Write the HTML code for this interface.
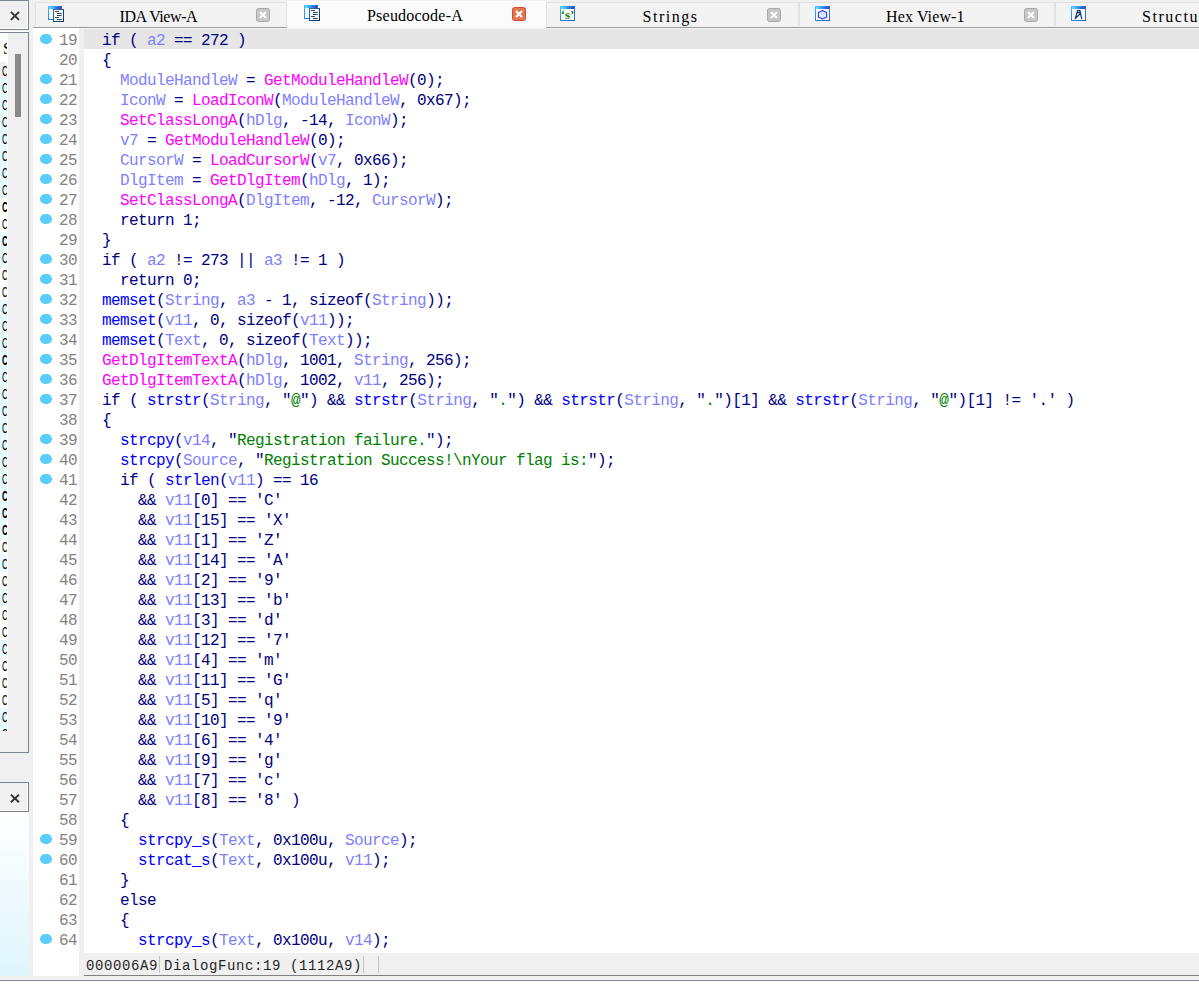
<!DOCTYPE html>
<html lang="en">
<head>
<meta charset="utf-8">
<title>IDA - Pseudocode-A</title>
<style>
*{box-sizing:border-box;margin:0;padding:0}
html,body{width:1199px;height:988px;overflow:hidden;background:#f0f0f0}
body{position:relative;font-family:"Liberation Sans",sans-serif}
.abs{position:absolute}
/* left column */
#xb1{left:-1px;top:0;width:30px;height:30px;border:1px solid #7a8391;background:#f0f0f0;box-shadow:inset -1px -1px 0 #fff}
#gap1{left:0;top:30px;width:29px;height:2px;background:#fbfbfb}
#lst{left:-1px;top:32px;width:30px;height:721px;border:1px solid #7a8391;background:#f0f0f0;overflow:hidden}
#lstc{left:0;top:0;width:8px;height:698px;background:#fff;overflow:hidden}
#lstc .hd{position:absolute;left:0;top:0;width:7px;height:29px;background:#fff;font:16px/18px "Liberation Serif",serif;color:#000;padding-left:3px;padding-top:7px;white-space:nowrap;overflow:hidden}
#lstc .r{position:absolute;left:0;width:7px;background:#fff;font:14px/19px "Liberation Sans",sans-serif;color:#000;overflow:hidden;white-space:nowrap}
#lstc .r b{display:inline-block;font-weight:inherit;transform:scaleX(.6);transform-origin:0 0;margin-left:1.5px}
#lstc .c{background:#e7fdfd}
#lstc .r0{background:#f0f0f0}
#lstc .b{font-weight:bold}
#thumb{left:15px;top:21px;width:6px;height:63px;background:#8a8a8a}
#xb2{left:-1px;top:782px;width:30px;height:30px;border:1px solid #7a8391;background:#f0f0f0;box-shadow:inset -1px -1px 0 #fff}
#ov{left:0;top:812px;width:29px;height:164px;background:linear-gradient(180deg,#ffffff 0%,#f2fbfe 40%,#def5fd 100%)}
.xi{position:absolute}
/* tabs */
#tabline{left:33px;top:26px;width:1166px;height:2px;background:linear-gradient(#ececec,#ececec 1px,#a0a0a0 1px)}
.tab{position:absolute;top:2px;height:24px;background:#f3f3f3;border:1px solid #e2e2e2;border-bottom:none}
.tab.act{top:1px;height:27px;background:#fbfbfb;border:none}
.tt{position:absolute;top:5px;font:16px/18px "Liberation Serif",serif;color:#000;white-space:pre}
.cb{position:absolute;width:14px;height:14px;border-radius:2.5px;background:#c6c6c6;border:1px solid #a9a9a9}
.cb.red{background:#df7850;border-color:#dc4636}
/* code */
#gut{left:33px;top:28px;width:46px;height:948px;background:#fff}
#band{left:79px;top:28px;width:5px;height:948px;background:#f0f0f0}
#code{left:84px;top:28px;width:1115px;height:925px;background:#fff;border-top:1px solid #f0f0f0}
#lines{left:33px;top:29px;width:1166px}
.ln{position:relative;height:20px;white-space:pre;font:16px/20px "Liberation Mono",monospace;letter-spacing:-0.6015px;color:#000080}
.ln.hl .cd{background:#e6e6e6}
.dot{position:absolute;left:7.3px;top:4.5px;width:11.3px;height:10.6px;border-radius:46%;background:#5bcdfa}
.no{position:absolute;left:26px;top:2px;width:18px;color:#858280;text-align:right}
.cd{position:absolute;left:51px;top:0;right:0;height:20px;line-height:24px}
.v{color:#8080ff}.i{color:#ff00ff}.f{color:#0000ff}.s{color:#008000}
/* status */
#st{left:84px;top:953px;width:1115px;height:23px;background:#f0f0f0;border-bottom:1px solid #808080;font:14px/22px "Liberation Mono",monospace;letter-spacing:0.6px;color:#262626;white-space:pre}
#st span{position:absolute;top:2px}
#st i{position:absolute;top:3px;width:1px;height:17px;background:#c4c4c4}
#bl{left:0;top:980px;width:1199px;height:1px;background:#858a93}
#bw{left:0;top:981px;width:1199px;height:7px;background:#fff}
</style>
</head>
<body>
<!-- left column -->
<div id="xb1" class="abs"><svg class="xi" style="left:10px;top:10px" width="12" height="12" viewBox="0 0 12 12"><path d="M0.9 0.9 L9 8.9 M9 0.9 L0.9 8.9" stroke="#333" stroke-width="1.95" fill="none"/></svg></div>
<div id="gap1" class="abs"></div>
<div id="lst" class="abs">
 <div id="lstc" class="abs">
  <div class="hd">S</div>
<div class="r r0" style="top:29px;height:17px"><b>C</b></div>
<div class="r c" style="top:46px;height:17px"><b>C</b></div>
<div class="r c" style="top:63px;height:17px"><b>C</b></div>
<div class="r c" style="top:80px;height:17px"><b>C</b></div>
<div class="r c" style="top:97px;height:17px"><b>C</b></div>
<div class="r c" style="top:114px;height:17px"><b>C</b></div>
<div class="r c" style="top:131px;height:17px"><b>C</b></div>
<div class="r c" style="top:148px;height:17px"><b>C</b></div>
<div class="r b" style="top:165px;height:17px"><b>C</b></div>
<div class="r" style="top:182px;height:17px"><b>C</b></div>
<div class="r c b" style="top:199px;height:17px"><b>C</b></div>
<div class="r c" style="top:216px;height:17px"><b>C</b></div>
<div class="r" style="top:233px;height:17px"><b>C</b></div>
<div class="r" style="top:250px;height:17px"><b>C</b></div>
<div class="r c" style="top:267px;height:17px"><b>C</b></div>
<div class="r c" style="top:284px;height:17px"><b>C</b></div>
<div class="r c" style="top:301px;height:17px"><b>C</b></div>
<div class="r c b" style="top:318px;height:17px"><b>C</b></div>
<div class="r c" style="top:335px;height:17px"><b>C</b></div>
<div class="r c" style="top:352px;height:17px"><b>C</b></div>
<div class="r c" style="top:369px;height:17px"><b>C</b></div>
<div class="r c" style="top:386px;height:17px"><b>C</b></div>
<div class="r c" style="top:403px;height:17px"><b>C</b></div>
<div class="r c" style="top:420px;height:17px"><b>C</b></div>
<div class="r c" style="top:437px;height:17px"><b>C</b></div>
<div class="r c b" style="top:454px;height:17px"><b>C</b></div>
<div class="r c b" style="top:471px;height:17px"><b>C</b></div>
<div class="r c b" style="top:488px;height:17px"><b>C</b></div>
<div class="r" style="top:505px;height:17px"><b>C</b></div>
<div class="r c" style="top:522px;height:17px"><b>C</b></div>
<div class="r" style="top:539px;height:17px"><b>C</b></div>
<div class="r c" style="top:556px;height:17px"><b>C</b></div>
<div class="r" style="top:573px;height:17px"><b>C</b></div>
<div class="r" style="top:590px;height:17px"><b>C</b></div>
<div class="r c" style="top:607px;height:17px"><b>C</b></div>
<div class="r" style="top:624px;height:17px"><b>C</b></div>
<div class="r" style="top:641px;height:17px"><b>C</b></div>
<div class="r" style="top:658px;height:17px"><b>C</b></div>
<div class="r c" style="top:675px;height:17px"><b>C</b></div>
<div class="r c" style="top:692px;height:6px"><b>C</b></div>

 </div>
 <div id="thumb" class="abs"></div>
</div>
<div id="xb2" class="abs"><svg class="xi" style="left:10px;top:10px" width="12" height="12" viewBox="0 0 12 12"><path d="M0.9 1.6 L9 9.3 M9 1.6 L0.9 9.3" stroke="#333" stroke-width="1.95" fill="none"/></svg></div>
<div id="ov" class="abs"></div>

<!-- tabs -->
<div id="tabline" class="abs"></div>
<svg width="0" height="0" style="position:absolute"><defs>
<linearGradient id="gb" x1="0" y1="0" x2="1" y2="1"><stop offset="0" stop-color="#36c0f6"/><stop offset="0.45" stop-color="#2f86e6"/><stop offset="1" stop-color="#2c5fcf"/></linearGradient>
<linearGradient id="gt" x1="0" y1="0" x2="1" y2="0"><stop offset="0" stop-color="#5fe6ff"/><stop offset="0.5" stop-color="#3a8fe6"/><stop offset="1" stop-color="#2d3bd0"/></linearGradient>
<linearGradient id="gd" x1="0" y1="0" x2="1" y2="1"><stop offset="0" stop-color="#3a6fae"/><stop offset="1" stop-color="#0b2f66"/></linearGradient>
<linearGradient id="gi" x1="0" y1="0" x2="1" y2="1"><stop offset="0" stop-color="#ffffff"/><stop offset="1" stop-color="#d8f4ff"/></linearGradient>
</defs></svg>
<div class="tab" style="left:35px;width:252px"><div style="position:absolute;left:12px;top:3px;width:17px;height:17px"><svg class="ic" width="17" height="17" viewBox="0 0 17 17"><rect x="0.5" y="0.5" width="13" height="13" fill="#f6ffff" stroke="url(#gb)"/><rect x="1" y="1" width="12" height="2" fill="url(#gt)"/><rect x="0" y="0" width="14" height="1" fill="url(#gt)" opacity="0.55"/><rect x="5.5" y="3.5" width="10" height="12" fill="url(#gi)" stroke="url(#gd)"/><path d="M7 5.5h4 M9 7.5h4.6 M9 9.5h4.6 M7 11.5h4 M9 13.5h4.6" stroke="#3d4550" stroke-width="1" fill="none"/></svg></div><span class="tt" style="left:83.5px;top:5px;letter-spacing:-0.41px">IDA View-A</span><div class="cb" style="left:220px;top:5px"><svg width="12" height="12" viewBox="0 0 12 12" style="position:absolute;left:0;top:0"><path d="M3 3 L9 9 M9 3 L3 9" stroke="#fff" stroke-width="2.1" fill="none"/></svg></div></div>
<div class="tab act" style="left:287px;width:259px"><div style="position:absolute;left:17px;top:4px;width:17px;height:17px"><svg class="ic" width="17" height="17" viewBox="0 0 17 17"><rect x="0.5" y="0.5" width="13" height="13" fill="#f6ffff" stroke="url(#gb)"/><rect x="1" y="1" width="12" height="2" fill="url(#gt)"/><rect x="0" y="0" width="14" height="1" fill="url(#gt)" opacity="0.55"/><rect x="5.5" y="3.5" width="10" height="12" fill="url(#gi)" stroke="url(#gd)"/><path d="M7 5.5h4 M9 7.5h4.6 M9 9.5h4.6 M7 11.5h4 M9 13.5h4.6" stroke="#3d4550" stroke-width="1" fill="none"/></svg></div><span class="tt" style="left:80px;top:6px;letter-spacing:0.22px">Pseudocode-A</span><div class="cb red" style="left:225px;top:6px"><svg width="12" height="12" viewBox="0 0 12 12" style="position:absolute;left:0;top:0"><path d="M3 3 L9 9 M9 3 L3 9" stroke="#fff" stroke-width="2.1" fill="none"/></svg></div></div>
<div class="tab" style="left:546px;width:253px"><div style="position:absolute;left:13px;top:3px;width:17px;height:17px"><svg class="ic" width="17" height="17" viewBox="0 0 17 17"><rect x="0.5" y="0.5" width="14" height="14" fill="#f6ffff" stroke="url(#gb)"/><rect x="1" y="1" width="13" height="2" fill="url(#gt)"/><rect x="0" y="0" width="15" height="1" fill="url(#gt)" opacity="0.55"/><text x="7.6" y="13.2" text-anchor="middle" font-family="Liberation Serif,serif" font-weight="bold" font-size="13" fill="#237d00">‘s’</text></svg></div><span class="tt" style="left:95.5px;top:5px;letter-spacing:1.54px">Strings</span><div class="cb" style="left:220px;top:5px"><svg width="12" height="12" viewBox="0 0 12 12" style="position:absolute;left:0;top:0"><path d="M3 3 L9 9 M9 3 L3 9" stroke="#fff" stroke-width="2.1" fill="none"/></svg></div></div>
<div class="tab" style="left:799px;width:256px"><div style="position:absolute;left:15px;top:3px;width:17px;height:17px"><svg class="ic" width="17" height="17" viewBox="0 0 17 17"><rect x="0.5" y="0.5" width="14" height="14" fill="#f6ffff" stroke="url(#gb)"/><rect x="1" y="1" width="13" height="2" fill="url(#gt)"/><rect x="0" y="0" width="15" height="1" fill="url(#gt)" opacity="0.55"/><path d="M7.5 4.6 L11.6 6.6 L11.6 11 L7.5 13 L3.4 11 L3.4 6.6 Z" fill="#dde9fa" stroke="#3434ff" stroke-width="1.1" stroke-linejoin="round"/></svg></div><span class="tt" style="left:86px;top:5px;letter-spacing:0.13px">Hex View-1</span><div class="cb" style="left:224px;top:5px"><svg width="12" height="12" viewBox="0 0 12 12" style="position:absolute;left:0;top:0"><path d="M3 3 L9 9 M9 3 L3 9" stroke="#fff" stroke-width="2.1" fill="none"/></svg></div></div>
<div class="tab" style="left:1055px;width:255px"><div style="position:absolute;left:15px;top:3px;width:17px;height:17px"><svg class="ic" width="17" height="17" viewBox="0 0 17 17"><rect x="0.5" y="0.5" width="14" height="14" fill="#f6ffff" stroke="url(#gb)"/><rect x="1" y="1" width="13" height="2" fill="url(#gt)"/><rect x="0" y="0" width="15" height="1" fill="url(#gt)" opacity="0.55"/><path d="M6.4 4.6h2.6 M6.6 6.6h2.4 M6.5 4.6 L4.3 12.6 M8.9 4.6 L10.7 12.6 M4.4 12.4 L9.2 7.8" stroke="#12306c" stroke-width="1.2" fill="none" stroke-linecap="round"/></svg></div><span class="tt" style="left:86px;top:5px;letter-spacing:1.53px">Structures</span><div class="cb" style="left:234px;top:5px"><svg width="12" height="12" viewBox="0 0 12 12" style="position:absolute;left:0;top:0"><path d="M3 3 L9 9 M9 3 L3 9" stroke="#fff" stroke-width="2.1" fill="none"/></svg></div></div>


<!-- code -->
<div id="gut" class="abs"></div>
<div id="band" class="abs"></div>
<div id="code" class="abs"></div>
<div id="lines" class="abs">
<div class="ln hl"><i class="dot"></i><span class="no">19</span><span class="cd">  if ( <span class="v">a2</span> == 272 )</span></div>
<div class="ln"><span class="no">20</span><span class="cd">  {</span></div>
<div class="ln"><i class="dot"></i><span class="no">21</span><span class="cd">    <span class="v">ModuleHandleW</span> = <span class="i">GetModuleHandleW</span>(0);</span></div>
<div class="ln"><i class="dot"></i><span class="no">22</span><span class="cd">    <span class="v">IconW</span> = <span class="i">LoadIconW</span>(<span class="v">ModuleHandleW</span>, 0x67);</span></div>
<div class="ln"><i class="dot"></i><span class="no">23</span><span class="cd">    <span class="i">SetClassLongA</span>(<span class="v">hDlg</span>, -14, <span class="v">IconW</span>);</span></div>
<div class="ln"><i class="dot"></i><span class="no">24</span><span class="cd">    <span class="v">v7</span> = <span class="i">GetModuleHandleW</span>(0);</span></div>
<div class="ln"><i class="dot"></i><span class="no">25</span><span class="cd">    <span class="v">CursorW</span> = <span class="i">LoadCursorW</span>(<span class="v">v7</span>, 0x66);</span></div>
<div class="ln"><i class="dot"></i><span class="no">26</span><span class="cd">    <span class="v">DlgItem</span> = <span class="i">GetDlgItem</span>(<span class="v">hDlg</span>, 1);</span></div>
<div class="ln"><i class="dot"></i><span class="no">27</span><span class="cd">    <span class="i">SetClassLongA</span>(<span class="v">DlgItem</span>, -12, <span class="v">CursorW</span>);</span></div>
<div class="ln"><i class="dot"></i><span class="no">28</span><span class="cd">    return 1;</span></div>
<div class="ln"><span class="no">29</span><span class="cd">  }</span></div>
<div class="ln"><i class="dot"></i><span class="no">30</span><span class="cd">  if ( <span class="v">a2</span> != 273 || <span class="v">a3</span> != 1 )</span></div>
<div class="ln"><i class="dot"></i><span class="no">31</span><span class="cd">    return 0;</span></div>
<div class="ln"><i class="dot"></i><span class="no">32</span><span class="cd">  <span class="f">memset</span>(<span class="v">String</span>, <span class="v">a3</span> - 1, sizeof(<span class="v">String</span>));</span></div>
<div class="ln"><i class="dot"></i><span class="no">33</span><span class="cd">  <span class="f">memset</span>(<span class="v">v11</span>, 0, sizeof(<span class="v">v11</span>));</span></div>
<div class="ln"><i class="dot"></i><span class="no">34</span><span class="cd">  <span class="f">memset</span>(<span class="v">Text</span>, 0, sizeof(<span class="v">Text</span>));</span></div>
<div class="ln"><i class="dot"></i><span class="no">35</span><span class="cd">  <span class="i">GetDlgItemTextA</span>(<span class="v">hDlg</span>, 1001, <span class="v">String</span>, 256);</span></div>
<div class="ln"><i class="dot"></i><span class="no">36</span><span class="cd">  <span class="i">GetDlgItemTextA</span>(<span class="v">hDlg</span>, 1002, <span class="v">v11</span>, 256);</span></div>
<div class="ln"><i class="dot"></i><span class="no">37</span><span class="cd">  if ( <span class="f">strstr</span>(<span class="v">String</span>, "<span class="s">@</span>") &amp;&amp; <span class="f">strstr</span>(<span class="v">String</span>, "<span class="s">.</span>") &amp;&amp; <span class="f">strstr</span>(<span class="v">String</span>, "<span class="s">.</span>")[1] &amp;&amp; <span class="f">strstr</span>(<span class="v">String</span>, "<span class="s">@</span>")[1] != '.' )</span></div>
<div class="ln"><span class="no">38</span><span class="cd">  {</span></div>
<div class="ln"><i class="dot"></i><span class="no">39</span><span class="cd">    <span class="f">strcpy</span>(<span class="v">v14</span>, "<span class="s">Registration failure.</span>");</span></div>
<div class="ln"><i class="dot"></i><span class="no">40</span><span class="cd">    <span class="f">strcpy</span>(<span class="v">Source</span>, "<span class="s">Registration Success!\nYour flag is:</span>");</span></div>
<div class="ln"><i class="dot"></i><span class="no">41</span><span class="cd">    if ( <span class="f">strlen</span>(<span class="v">v11</span>) == 16</span></div>
<div class="ln"><span class="no">42</span><span class="cd">      &amp;&amp; <span class="v">v11</span>[0] == 'C'</span></div>
<div class="ln"><span class="no">43</span><span class="cd">      &amp;&amp; <span class="v">v11</span>[15] == 'X'</span></div>
<div class="ln"><span class="no">44</span><span class="cd">      &amp;&amp; <span class="v">v11</span>[1] == 'Z'</span></div>
<div class="ln"><span class="no">45</span><span class="cd">      &amp;&amp; <span class="v">v11</span>[14] == 'A'</span></div>
<div class="ln"><span class="no">46</span><span class="cd">      &amp;&amp; <span class="v">v11</span>[2] == '9'</span></div>
<div class="ln"><span class="no">47</span><span class="cd">      &amp;&amp; <span class="v">v11</span>[13] == 'b'</span></div>
<div class="ln"><span class="no">48</span><span class="cd">      &amp;&amp; <span class="v">v11</span>[3] == 'd'</span></div>
<div class="ln"><span class="no">49</span><span class="cd">      &amp;&amp; <span class="v">v11</span>[12] == '7'</span></div>
<div class="ln"><span class="no">50</span><span class="cd">      &amp;&amp; <span class="v">v11</span>[4] == 'm'</span></div>
<div class="ln"><span class="no">51</span><span class="cd">      &amp;&amp; <span class="v">v11</span>[11] == 'G'</span></div>
<div class="ln"><span class="no">52</span><span class="cd">      &amp;&amp; <span class="v">v11</span>[5] == 'q'</span></div>
<div class="ln"><span class="no">53</span><span class="cd">      &amp;&amp; <span class="v">v11</span>[10] == '9'</span></div>
<div class="ln"><span class="no">54</span><span class="cd">      &amp;&amp; <span class="v">v11</span>[6] == '4'</span></div>
<div class="ln"><span class="no">55</span><span class="cd">      &amp;&amp; <span class="v">v11</span>[9] == 'g'</span></div>
<div class="ln"><span class="no">56</span><span class="cd">      &amp;&amp; <span class="v">v11</span>[7] == 'c'</span></div>
<div class="ln"><span class="no">57</span><span class="cd">      &amp;&amp; <span class="v">v11</span>[8] == '8' )</span></div>
<div class="ln"><span class="no">58</span><span class="cd">    {</span></div>
<div class="ln"><i class="dot"></i><span class="no">59</span><span class="cd">      <span class="f">strcpy_s</span>(<span class="v">Text</span>, 0x100u, <span class="v">Source</span>);</span></div>
<div class="ln"><i class="dot"></i><span class="no">60</span><span class="cd">      <span class="f">strcat_s</span>(<span class="v">Text</span>, 0x100u, <span class="v">v11</span>);</span></div>
<div class="ln"><span class="no">61</span><span class="cd">    }</span></div>
<div class="ln"><span class="no">62</span><span class="cd">    else</span></div>
<div class="ln"><span class="no">63</span><span class="cd">    {</span></div>
<div class="ln"><i class="dot"></i><span class="no">64</span><span class="cd">      <span class="f">strcpy_s</span>(<span class="v">Text</span>, 0x100u, <span class="v">v14</span>);</span></div>

</div>
<div id="st" class="abs"><span style="left:2px">000006A9</span><i style="left:75px"></i><span style="left:80px">DialogFunc:19 (1112A9)</span><i style="left:279px"></i><i style="left:294px"></i></div>
<div id="bl" class="abs"></div>
<div id="bw" class="abs"></div>
</body>
</html>
